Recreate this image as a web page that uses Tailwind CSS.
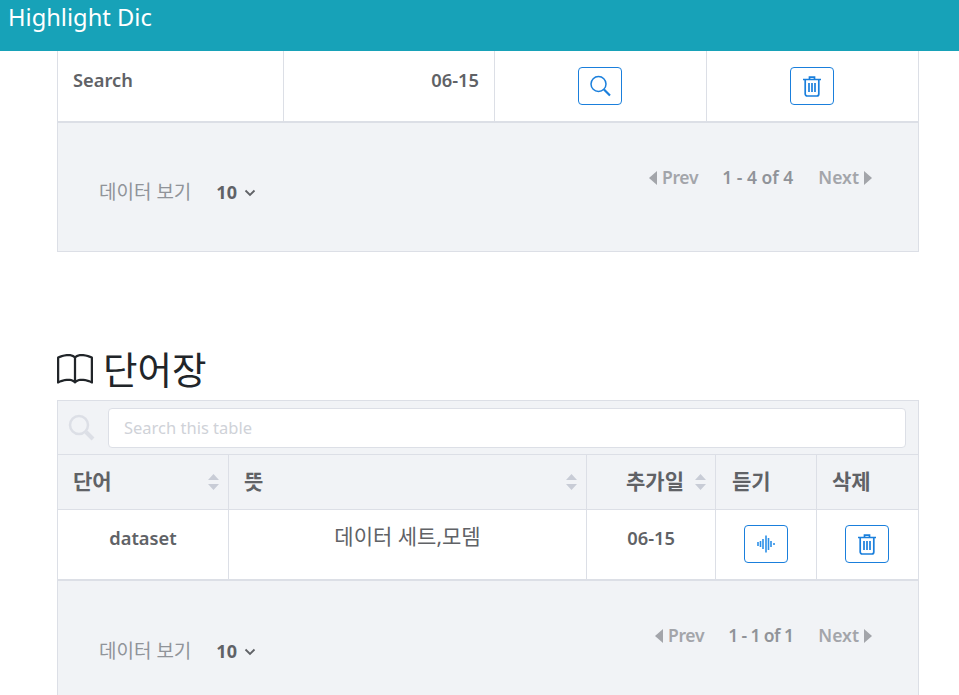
<!DOCTYPE html>
<html lang="en">
<head>
  <meta charset="UTF-8">
  <meta name="viewport" content="width=device-width, initial-scale=1.0">
  <title>Highlight Dic</title>
  <script src="https://cdn.jsdelivr.net/npm/@tailwindcss/browser@4"></script>
</head>
<body class="bg-white font-['Noto_Sans','Noto_Sans_CJK_KR',sans-serif] text-[#606266]">
  <div class="h-screen overflow-hidden">
    <!-- Navbar -->
    <div class="h-[51px] bg-[#17a2b8] pl-2 text-[23.7px] leading-[35px] text-white">Highlight Dic</div>

    <div class="ml-[57px] w-[862px]">
      <!-- First table (scrolled) -->
      <div class="border-x border-[#dcdfe6]">
        <div class="grid h-[70px] grid-cols-[225px_211px_212px_1fr] text-[18.300px] font-semibold">
          <div class="px-[15px] pt-[15px] leading-[27px]">Search</div>
          <div class="border-l border-[#dcdfe6] px-[15px] pt-[15px] text-right leading-[27px]">06-15</div>
          <div class="flex justify-center border-l border-[#dcdfe6] pr-[2px] pt-[16px]">
            <button class="flex h-[38px] w-[44px] items-center justify-center rounded-[4px] border border-[#1a7fdc] text-[#1a7fdc]">
              <svg class="h-[26px] w-[26px]" viewBox="0 0 26 26" fill="none" stroke="currentColor"><circle cx="11.500" cy="11" r="7.500" stroke-width="1.500"/><path d="M17 16.500l6 6" stroke-width="2.200"/></svg>
            </button>
          </div>
          <div class="flex justify-center border-l border-[#dcdfe6] pr-[2px] pt-[16px]">
            <button class="flex h-[38px] w-[44px] items-center justify-center rounded-[4px] border border-[#1a7fdc] text-[#1a7fdc]">
              <svg class="h-[22px] w-[20px]" viewBox="0 0 20 22" fill="none" stroke="currentColor" stroke-width="1.700"><path d="M1 4.500h18M7.500 4V2.200h5V4M3.200 5v14a2 2 0 0 0 2 2h9.600a2 2 0 0 0 2-2V5M7 8v9M10 8v9M13 8v9"/></svg>
            </button>
          </div>
        </div>
        <!-- Footer -->
        <div class="flex h-[131px] items-start justify-between border-y border-t-2 border-[#dcdfe6] bg-[#f1f3f6] pl-[41px] pr-[46px]">
          <div class="flex items-center pt-[56px] leading-[27px]">
            <span class="text-[19px] text-[#909399]">데이터 보기</span>
            <span class="ml-[25px] text-[18px] font-bold">10</span>
            <svg class="ml-[7px] h-[8px] w-[12px]" viewBox="0 0 12 8" fill="none" stroke="#606266" stroke-width="1.800"><path d="M1.500 1.500L6 6l4.500-4.500"/></svg>
          </div>
          <div class="flex items-center pt-[41px] text-[17.500px] font-semibold leading-[27px] text-[#a3a5aa]">
            <svg class="mr-[5px] h-[14px] w-[8px]" viewBox="0 0 8 14" fill="#a3a5aa"><path d="M8 0v14L0 7z"/></svg>
            <span class="tracking-[-0.3px]">Prev</span>
            <span class="ml-[24px] text-[#909399]">1 - 4 of 4</span>
            <span class="ml-[25px]">Next</span>
            <svg class="ml-[5px] h-[14px] w-[8px]" viewBox="0 0 8 14" fill="#a3a5aa"><path d="M0 0v14l8-7z"/></svg>
          </div>
        </div>
      </div>

      <!-- Vocabulary heading -->
      <div class="mt-[90px] flex h-[56px] items-center text-[#212529]">
        <svg class="h-[36px] w-[36px]" viewBox="0 0 16 16" fill="currentColor"><path d="M1 2.828c.885-.37 2.154-.769 3.388-.893 1.33-.134 2.458.063 3.112.752v9.746c-.935-.53-2.12-.603-3.213-.493-1.18.12-2.37.461-3.287.811V2.828zm7.500-.141c.654-.689 1.782-.886 3.112-.752 1.234.124 2.503.523 3.388.893v9.923c-.918-.35-2.107-.692-3.287-.81-1.094-.111-2.278-.039-3.213.492V2.687zM8 1.783C7.015.936 5.587.81 4.287.94c-1.514.153-3.042.672-3.994 1.105A.5.5 0 0 0 0 2.500v11a.5.5 0 0 0 .707.455c.882-.4 2.303-.881 3.680-1.020 1.409-.142 2.590.087 3.223.877a.5.5 0 0 0 .78 0c.633-.79 1.814-1.019 3.222-.877 1.378.139 2.800.620 3.681 1.020A.5.5 0 0 0 16 13.500v-11a.5.5 0 0 0-.293-.455c-.952-.433-2.480-.952-3.994-1.105C10.413.809 8.985.936 8 1.783z"/></svg>
        <span class="ml-[10px] text-[37.500px]">단어장</span>
      </div>

      <!-- Vocabulary table -->
      <div class="mt-[2px] border border-b-0 border-[#dcdfe6]">
        <div class="flex h-[54px] items-center border-b border-[#dcdfe6] bg-[#f1f3f6] pl-[10px] pr-[12px]">
          <svg class="h-[27px] w-[27px] shrink-0" viewBox="0 0 27 27" fill="none" stroke="#dcdfe6"><circle cx="11" cy="11" r="9" stroke-width="2.500"/><path d="M18 18l7 7" stroke-width="4"/></svg>
          <div class="ml-[13px] flex h-[40px] flex-1 items-center rounded-[4px] border border-[#dcdfe6] bg-white pl-[15px] pt-[2px] text-[16.500px] text-[#cfd2d8]">Search this table</div>
        </div>
        <div class="grid h-[55px] grid-cols-[170px_358px_129px_101px_1fr] border-b border-[#dcdfe6] bg-[#f1f3f6] text-[21px] font-semibold">
          <div class="flex items-center justify-between pl-[15px] pr-[9px]">
            <span>단어</span>
            <svg class="h-[16px] w-[11px]" viewBox="0 0 11 16" fill="#c8ccd6"><path d="M5.500 0L11 6H0zM5.500 16L0 10h11z"/></svg>
          </div>
          <div class="flex items-center justify-between border-l border-[#dcdfe6] pl-[15px] pr-[9px]">
            <span>뜻</span>
            <svg class="h-[16px] w-[11px]" viewBox="0 0 11 16" fill="#c8ccd6"><path d="M5.500 0L11 6H0zM5.500 16L0 10h11z"/></svg>
          </div>
          <div class="flex items-center justify-end border-l border-[#dcdfe6] pr-[9px]">
            <span>추가일</span>
            <svg class="ml-[11px] h-[16px] w-[11px]" viewBox="0 0 11 16" fill="#c8ccd6"><path d="M5.500 0L11 6H0zM5.500 16L0 10h11z"/></svg>
          </div>
          <div class="flex items-center border-l border-[#dcdfe6] pl-[16px]">듣기</div>
          <div class="flex items-center border-l border-[#dcdfe6] pl-[15px]">삭제</div>
        </div>
        <div class="grid h-[70px] grid-cols-[170px_358px_129px_101px_1fr] text-[18.300px]">
          <div class="pt-[14px] text-center font-semibold leading-[27px]">dataset</div>
          <div class="border-l border-[#dcdfe6] pt-[13px] text-center text-[21px] leading-[27px]">데이터 세트,모뎀</div>
          <div class="border-l border-[#dcdfe6] pr-[40px] pt-[14px] text-right font-semibold leading-[27px]">06-15</div>
          <div class="flex justify-center border-l border-[#dcdfe6] pt-[15px]">
            <button class="flex h-[38px] w-[44px] items-center justify-center rounded-[4px] border border-[#1a7fdc] text-[#2b8fe8]">
              <svg class="h-[18px] w-[19px]" viewBox="0 0 19 18" fill="none" stroke="currentColor" stroke-width="1.600"><path d="M1 7v4M3.500 6v6M6 4v10M9 0.500v17M11.500 3v12M14 6v6M17 8v2"/></svg>
            </button>
          </div>
          <div class="flex justify-center border-l border-[#dcdfe6] pr-[2px] pt-[15px]">
            <button class="flex h-[38px] w-[44px] items-center justify-center rounded-[4px] border border-[#1a7fdc] text-[#1a7fdc]">
              <svg class="h-[22px] w-[20px]" viewBox="0 0 20 22" fill="none" stroke="currentColor" stroke-width="1.700"><path d="M1 4.500h18M7.500 4V2.200h5V4M3.200 5v14a2 2 0 0 0 2 2h9.600a2 2 0 0 0 2-2V5M7 8v9M10 8v9M13 8v9"/></svg>
            </button>
          </div>
        </div>
        <div class="mt-[-1px] flex h-[130px] items-start justify-between border-t-2 border-[#dcdfe6] bg-[#f1f3f6] pl-[41px] pr-[46px]">
          <div class="flex items-center pt-[57px] leading-[27px]">
            <span class="text-[19px] text-[#909399]">데이터 보기</span>
            <span class="ml-[25px] text-[18px] font-bold">10</span>
            <svg class="ml-[7px] h-[8px] w-[12px]" viewBox="0 0 12 8" fill="none" stroke="#606266" stroke-width="1.800"><path d="M1.500 1.500L6 6l4.500-4.500"/></svg>
          </div>
          <div class="flex items-center pt-[41px] text-[17.500px] font-semibold leading-[27px] text-[#a3a5aa]">
            <svg class="mr-[5px] h-[14px] w-[8px]" viewBox="0 0 8 14" fill="#a3a5aa"><path d="M8 0v14L0 7z"/></svg>
            <span class="tracking-[-0.3px]">Prev</span>
            <span class="ml-[24px] tracking-[-0.6px] text-[#909399]">1 - 1 of 1</span>
            <span class="ml-[25px]">Next</span>
            <svg class="ml-[5px] h-[14px] w-[8px]" viewBox="0 0 8 14" fill="#a3a5aa"><path d="M0 0v14l8-7z"/></svg>
          </div>
        </div>
      </div>
    </div>
  </div>
</body>
</html>
